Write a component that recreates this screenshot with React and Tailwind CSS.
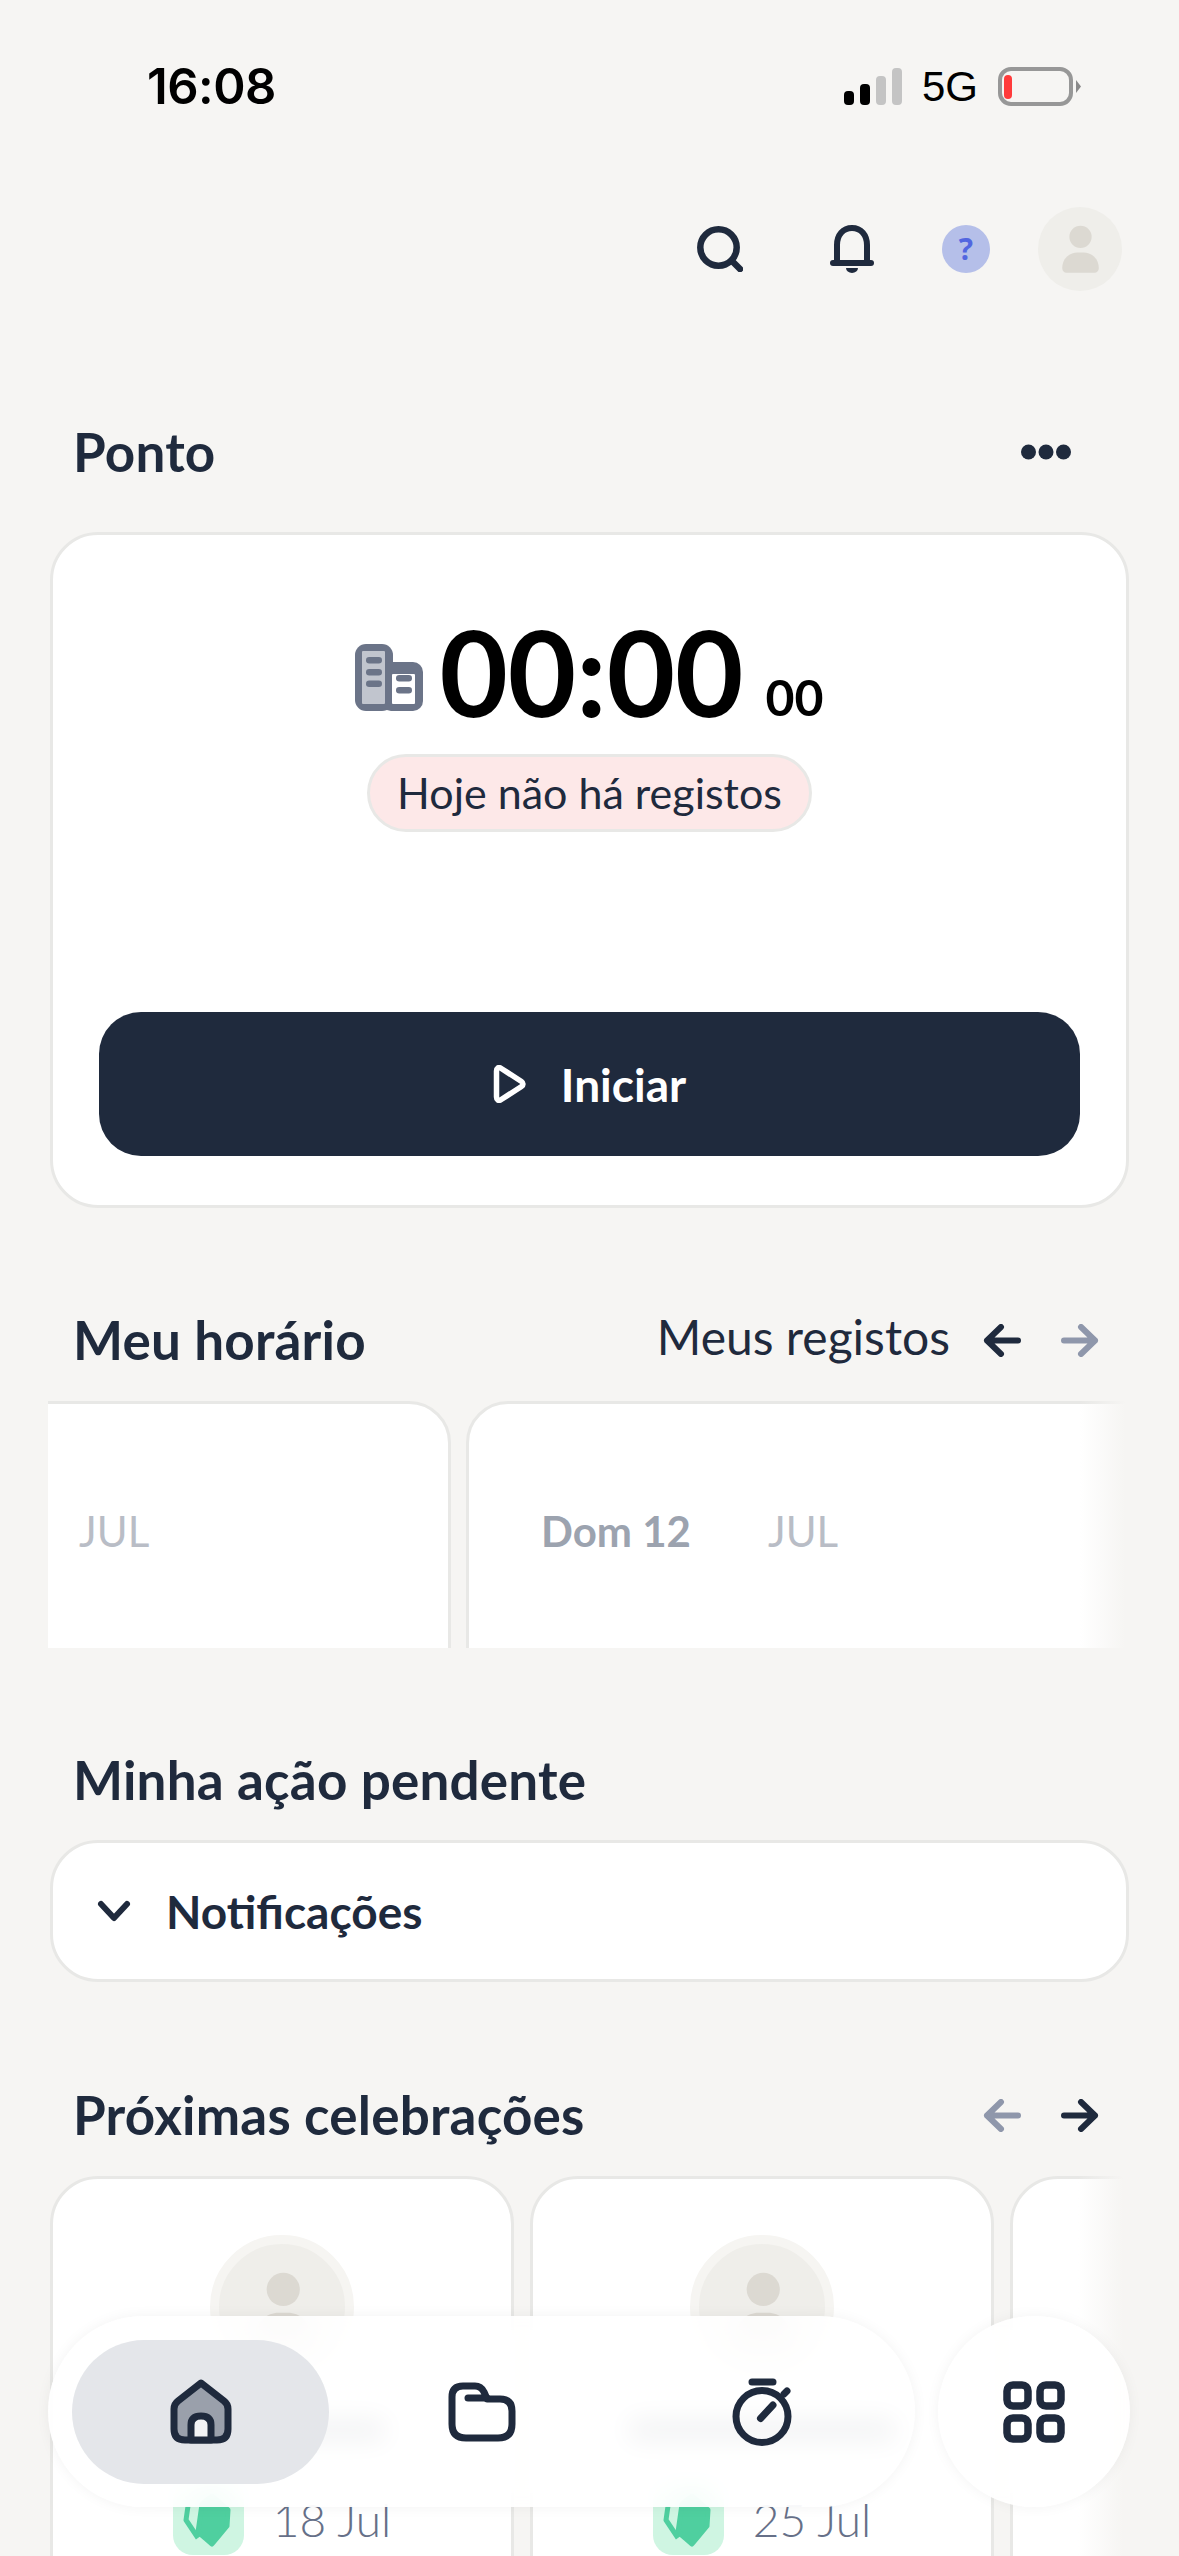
import { clsx } from 'clsx';

const ink = '#1f2a3d';

function Arrow({ dir = 'left', color = ink }) {
  return (
    <svg width="38" height="33" viewBox="0 0 38 33" fill="none" stroke={color} strokeWidth="6" strokeLinecap="round" strokeLinejoin="round">
      {dir === 'left' ? <path d="M35 16.5H4M18 3 4 16.5 18 30" /> : <path d="M3 16.5h31M20 3l14 13.5L20 30" />}
    </svg>
  );
}

function Person({ size }) {
  return (
    <svg width={size} height={size} viewBox="0 0 83 83" fill="#dcd9d2">
      <circle cx="42" cy="29.5" r="11" />
      <path d="M24 60c0-9 7-15 15-15h6c8 0 15 6 15 15v1c0 2-2 4-4 4H28c-2 0-4-2-4-4z" />
    </svg>
  );
}

function Avatar({ size, personSize, className }) {
  return (
    <div
      className={clsx('flex items-center justify-center rounded-full bg-[#efeeea]', className)}
      style={{ width: size, height: size }}
    >
      <Person size={personSize} />
    </div>
  );
}

function StatusBar() {
  return (
    <div className="flex h-[175px] items-start justify-between pt-[62px] pl-[147px] pr-[98px]">
      <span className="font-['Inter',sans-serif] text-[49px] leading-[50px] font-semibold tracking-[-0.5px] text-black">16:08</span>
      <div className="flex items-center pt-[5px]">
        <svg width="58" height="37" viewBox="0 0 58 37">
          <rect x="0" y="23" width="10" height="14" rx="4" fill="#000" />
          <rect x="16" y="16" width="10" height="21" rx="4" fill="#000" />
          <rect x="32" y="8" width="10" height="29" rx="4" fill="#c4c4c4" />
          <rect x="48" y="0" width="10" height="37" rx="4" fill="#c4c4c4" />
        </svg>
        <span className="ml-[20px] font-['Liberation_Sans',sans-serif] text-[42px] leading-[38px] text-black">5G</span>
        <svg className="ml-[20px]" width="83" height="39" viewBox="0 0 83 39" fill="none">
          <rect x="2" y="2" width="71" height="35" rx="11" stroke="#979797" strokeWidth="4" />
          <rect x="6" y="8" width="8" height="24" rx="4" fill="#ff3b3b" />
          <path d="M78 13l5 6.5-5 6.5z" fill="#8a8a8a" />
        </svg>
      </div>
    </div>
  );
}

function TopActions() {
  return (
    <div className="mt-[32px] flex h-[83px] items-center pr-[57px] justify-end">
      <svg width="46" height="46" viewBox="0 0 46 46" fill="none" stroke={ink} strokeWidth="6.5" strokeLinecap="round">
        <circle cx="21.5" cy="21.5" r="18.2" />
        <path d="M35 35l8 8" />
      </svg>
      <svg className="ml-[87px]" width="44" height="48" viewBox="0 0 44 48" fill="none" stroke={ink} strokeWidth="6" strokeLinecap="round">
        <path d="M7 37V20C7 10 13 3 22 3s15 7 15 17v17" />
        <path d="M3 38h38" />
        <path d="M16 43h12a6 5 0 0 1-12 0z" fill={ink} stroke="none" />
      </svg>
      <div className="ml-[68px] flex h-[48px] w-[48px] items-center justify-center rounded-full bg-[#b5bfe9] font-['Open_Sans',sans-serif] text-[30px] leading-none font-bold text-[#5266e0]">?</div>
      <Avatar className="ml-[48px]" size={84} personSize={84} />
    </div>
  );
}

function Heading({ children, className }) {
  return <h2 className={clsx('text-[53px] leading-[60px] font-bold tracking-[0.2px]', 'text-[#1f2a3d]', className)}>{children}</h2>;
}

function BuildingIcon() {
  return (
    <svg width="68" height="67" viewBox="0 0 68 67">
      <rect x="0" y="0" width="38" height="67" rx="11" fill="#6b7488" />
      <rect x="26" y="18" width="42" height="49" rx="10" fill="#6b7488" />
      <rect x="7" y="7" width="23" height="53" rx="1" fill="#c1c5ce" />
      <rect x="37" y="30" width="23" height="30" rx="1" fill="#fff" />
      <rect x="11" y="13" width="16" height="6.5" rx="3.2" fill="#6b7488" />
      <rect x="11" y="25" width="16" height="6.5" rx="3.2" fill="#6b7488" />
      <rect x="11" y="36.5" width="16" height="6.5" rx="3.2" fill="#6b7488" />
      <rect x="41" y="31" width="16" height="6.5" rx="3.2" fill="#6b7488" />
      <rect x="41" y="43" width="16" height="6.5" rx="3.2" fill="#6b7488" />
    </svg>
  );
}

function ClockCard() {
  return (
    <section className="mx-[50px] mt-[50px] flex h-[676px] flex-col items-center rounded-[48px] border-[3px] border-[#e8e8e6] bg-white px-[46px]">
      <div className="mt-[93px] flex items-end">
        <div className="mb-[5px]">
          <BuildingIcon />
        </div>
        <span className="ml-[16px] text-[118px] leading-[88px] font-bold text-black">00:00</span>
        <span className="mb-[-2px] ml-[22px] text-[50px] leading-[42px] font-bold text-black">00</span>
      </div>
      <div className="mt-[38px] flex h-[78px] w-[445px] items-center justify-center rounded-full border-[3px] border-[#e8e8e6] bg-[#fde8e8] text-[43px] text-[#1f2a3d]">
        Hoje não há registos
      </div>
      <button className="mt-[180px] flex h-[144px] w-[981px] items-center justify-center rounded-[42px] bg-[#1f2a3d] text-[46px] font-bold text-white">
        <svg width="33" height="38" viewBox="0 0 33 38" fill="none" stroke="#fff" strokeWidth="5.5" strokeLinejoin="round">
          <path d="M3.5 6c0-3 2-4 4-3l21 13.5c2 1.3 2 3.7 0 5L7.500 35c-2 1-4 0-4-3z" />
        </svg>
        <span className="ml-[35px]">Iniciar</span>
      </button>
    </section>
  );
}

function ScheduleRow() {
  return (
    <>
      <div className="mt-[102px] flex h-[60px] items-center pl-[73px] pr-[80px]">
        <Heading>Meu horário</Heading>
        <span className="ml-auto mb-[6px] text-[48px] text-[#1f2a3d]">Meus registos</span>
        <div className="ml-[33px]"><Arrow /></div>
        <div className="ml-[40px]"><Arrow dir="right" color="#8f97ab" /></div>
      </div>
      <div className="relative ml-[48px] mt-[31px] flex h-[247px] w-[1077px] gap-[15px] overflow-hidden">
        <div className="ml-[-200px] h-[300px] w-[603px] shrink-0 rounded-[42px] border-[3px] border-[#e8e8e6] bg-white pl-[228px] pt-[96px]">
          <span className="text-[42px] text-[#b9bdc6]">JUL</span>
        </div>
        <div className="flex h-[300px] w-[700px] shrink-0 items-start gap-[77px] rounded-[42px] border-[3px] border-[#e8e8e6] bg-white pl-[72px] pt-[96px] text-[42px]">
          <span className="font-bold text-[#9ca3af]">Dom 12</span>
          <span className="text-[#b9bdc6]">JUL</span>
        </div>
        <div className="absolute inset-y-0 right-0 w-[45px] bg-gradient-to-r from-transparent to-[#f6f5f3]" />
      </div>
    </>
  );
}

function PendingAction() {
  return (
    <>
      <Heading className="mt-[102px] pl-[73px]">Minha ação pendente</Heading>
      <div className="mx-[50px] mt-[30px] flex h-[142px] items-center rounded-[48px] border-[3px] border-[#e8e8e6] bg-white pl-[44px]">
        <svg width="34" height="22" viewBox="0 0 34 22" fill="none" stroke={ink} strokeWidth="6" strokeLinecap="round" strokeLinejoin="round">
          <path d="M4 4l13 14L30 4" />
        </svg>
        <span className="ml-[35px] text-[46px] font-bold text-[#1f2a3d]">Notificações</span>
      </div>
    </>
  );
}

function GiftBadge() {
  return (
    <div className="flex h-[71px] w-[71px] shrink-0 items-center justify-center rounded-[20px] bg-[#cff5e2]">
      <svg width="52" height="56" viewBox="0 0 52 56" fill="none" stroke="#4fcf9f" strokeWidth="5" strokeLinejoin="round">
        <path d="M20 12l10-8 16 14-1 16-15 18-14-12z" fill="#4fcf9f" />
        <path d="M6 14l-2 14 12 18" />
      </svg>
    </div>
  );
}

function CelebrationCard({ date, nameWidth }) {
  return (
    <div className="flex h-[500px] w-[464px] shrink-0 flex-col items-center rounded-[48px] border-[3px] border-[#e8e8e6] bg-white pt-[56px]">
      <Avatar className="border-[9px] border-[#f6f5f2]" size={144} personSize={125} />
      <div className="mt-[38px] h-[26px] rounded-full bg-[#8f949e]" style={{ width: nameWidth }} />
      <div className="mt-[41px] flex items-center gap-[29px]">
        <GiftBadge />
        <span className="text-[46px] font-light leading-[60px] text-[#667088]">{date}</span>
      </div>
    </div>
  );
}

function Celebrations() {
  return (
    <>
      <div className="mt-[103px] flex h-[60px] items-center pl-[73px] pr-[80px]">
        <Heading>Próximas celebrações</Heading>
        <div className="ml-auto"><Arrow color="#8f97ab" /></div>
        <div className="ml-[40px]"><Arrow dir="right" /></div>
      </div>
      <div className="relative ml-[50px] mt-[31px] flex w-[1073px] gap-[16px] overflow-hidden">
        <CelebrationCard date="18 Jul" nameWidth={210} />
        <CelebrationCard date="25 Jul" nameWidth={270} />
        <div className="h-[500px] w-[464px] shrink-0 rounded-[48px] border-[3px] border-[#e8e8e6] bg-white" />
        <div className="absolute inset-y-0 right-0 w-[45px] bg-gradient-to-r from-transparent to-[#f6f5f3]" />
      </div>
    </>
  );
}

function BottomNav() {
  return (
    <nav className="absolute bottom-[49px] left-[48px] flex w-[1082px] justify-between">
      <div className="flex h-[191px] w-[867px] items-center rounded-full bg-white/90 pl-[24px] shadow-[0_0_14px_rgba(0,0,0,0.05)] backdrop-blur-md">
        <div className="flex h-[144px] w-[257px] items-center justify-center rounded-full bg-[#e4e6ea]">
          <svg width="62" height="65" viewBox="0 0 62 65" fill="#9aa0ab" stroke={ink} strokeWidth="7" strokeLinejoin="round">
            <path d="M31 4 54 22q4 3 4 8v20q0 11-11 11H15Q4 61 4 50V30q0-5 4-8z" />
            <path d="M21 61V46q0-9 10-9t10 9v15z" fill="#f2f3f5" />
          </svg>
        </div>
        <div className="flex w-[306px] justify-center">
          <svg width="68" height="60" viewBox="0 0 68 60" fill="none" stroke={ink} strokeWidth="7" strokeLinecap="round" strokeLinejoin="round">
            <path d="M4 15Q4 4 15 4h12q6 0 9 6l3 7h13q12 0 12 12v13q0 14-14 14H18Q4 56 4 42z" />
            <path d="M20 16h19" />
          </svg>
        </div>
        <div className="flex w-[254px] justify-center">
          <svg width="60" height="68" viewBox="0 0 60 68" fill="none" stroke={ink} strokeWidth="7" strokeLinecap="round">
            <circle cx="30" cy="38.500" r="26" />
            <path d="M20 4h21M52 16l3-3M28.500 40.500 41 27" />
          </svg>
        </div>
      </div>
      <div className="flex h-[191px] w-[192px] items-center justify-center rounded-full bg-white/90 shadow-[0_0_14px_rgba(0,0,0,0.05)] backdrop-blur-md">
        <svg width="62" height="62" viewBox="0 0 62 62" fill="none" stroke={ink} strokeWidth="7.5">
          <rect x="4" y="4" width="21" height="21" rx="6" />
          <rect x="37" y="4" width="21" height="21" rx="6" />
          <rect x="4" y="37" width="21" height="21" rx="6" />
          <rect x="37" y="37" width="21" height="21" rx="6" />
        </svg>
      </div>
    </nav>
  );
}

export default function App() {
  return (
    <div className="relative h-[2556px] w-[1179px] overflow-hidden bg-[#f6f5f3] font-['Lato',sans-serif]">
      <StatusBar />
      <TopActions />
      <div className="mt-[132px] flex h-[60px] items-center pl-[73px] pr-[108px]">
        <Heading>Ponto</Heading>
        <svg className="ml-auto" width="50" height="16" viewBox="0 0 50 16" fill={ink}>
          <circle cx="7.500" cy="8" r="7.500" />
          <circle cx="25" cy="8" r="7.500" />
          <circle cx="42.500" cy="8" r="7.500" />
        </svg>
      </div>
      <ClockCard />
      <ScheduleRow />
      <PendingAction />
      <Celebrations />
      <BottomNav />
    </div>
  );
}
